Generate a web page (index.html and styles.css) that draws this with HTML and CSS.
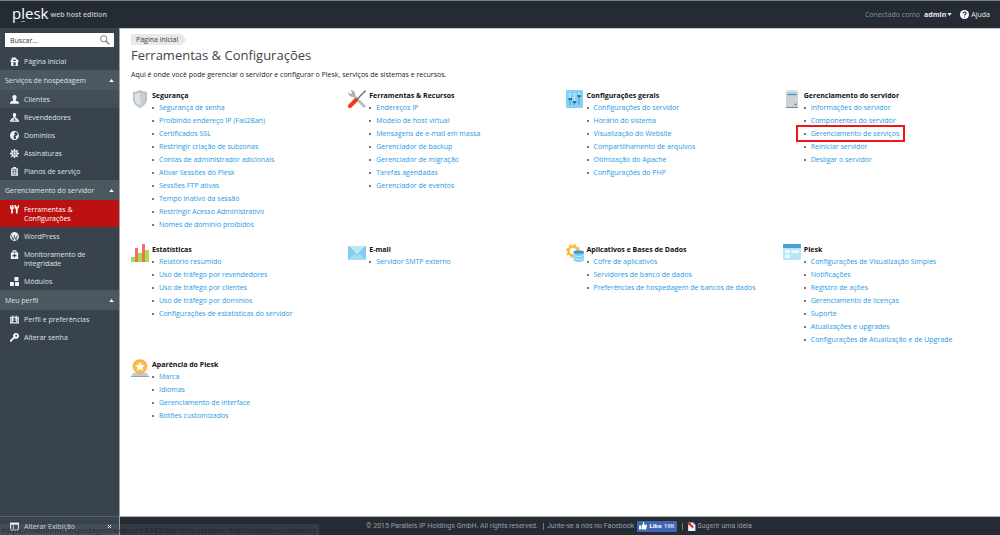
FILE: index.html
```
<!DOCTYPE html>
<html lang="pt-BR">
<head>
<meta charset="utf-8">
<title>Ferramentas &amp; Configurações - Plesk</title>
<link rel="stylesheet" href="styles.css">
</head>
<body>
<header class="topbar">
  <a class="brand" href="#"><span class="brand-name">p<span class="brand-l">l</span>esk</span><span class="brand-edition">web host edition</span></a>
  <div class="account">
    <span class="account-label">Conectado como</span>
    <button class="account-user" type="button">admin<svg class="caret" viewBox="0 0 6 4"><path d="M0 0h6L3 4z" fill="currentColor"/></svg></button>
    <a class="help" href="#"><svg class="help-icon" viewBox="0 0 16 16"><circle cx="8" cy="8" r="8" fill="#fff"/><path d="M5.300 6.200c0-3.600 5.500-3.400 5.500-.4 0 1.800-2.600 1.900-2.600 3.900M8.200 11.400v2" fill="none" stroke="#242b32" stroke-width="2"/></svg>Ajuda</a>
  </div>
</header>
<div class="shell">
  <aside class="sidebar">
    <form class="search" role="search">
      <input class="search-input" type="text" placeholder="Buscar..." aria-label="Buscar">
      <button class="search-button" type="submit" aria-label="Buscar"><svg viewBox="0 0 16 16"><circle cx="6" cy="6" r="5" fill="none" stroke="#777" stroke-width="1.500"/><path d="M9.500 9.500L15 15" stroke="#777" stroke-width="2.200"/></svg></button>
    </form>
    <nav class="nav">
      <a class="nav-item" href="#"><svg class="nav-icon" viewBox="0 0 16 16"><path d="M8 0l8 7-1.300 1.400L14 8v8H2V8l-.7.400L0 7l3-2.600V1h2.500v1.300z" fill="#f2f4f5"/><path d="M6 15V9.500h4V15M8 4l-3 3h6z" fill="#38434d"/></svg>Página inicial</a>
      <button class="nav-group" type="button">Serviços de hospedagem<svg class="nav-caret" viewBox="0 0 6 4"><path d="M0 4h6L3 0z" fill="#fff"/></svg></button>
      <a class="nav-item nav-item-hover" href="#"><svg class="nav-icon" viewBox="0 0 16 16"><path d="M8 0c3 0 4 2 3.700 4.500C11.500 7 10 8 10 9.500c0 1.500 6 2 6 4.500v1.500H0V14c0-2.500 6-3 6-4.500C6 8 4.500 7 4.300 4.500 4 2 5 0 8 0z" fill="#f2f4f5"/></svg>Clientes</a>
      <a class="nav-item" href="#"><svg class="nav-icon" viewBox="0 0 16 16"><path d="M8 0c2.500 0 3.400 2 3 4-.3 2-1.500 2.500-1.500 4l5 2.500V13H16v2.500H0V13h1.500v-2.500l5-2.500c0-1.500-1.200-2-1.500-4-.4-2 .5-4 3-4z" fill="#f2f4f5"/><path d="M4 12.500h8M8 9v4" stroke="#38434d" stroke-width="1.200"/></svg>Revendedores</a>
      <a class="nav-item" href="#"><svg class="nav-icon" viewBox="0 0 16 16"><circle cx="8" cy="8" r="7" fill="#38434d" stroke="#f2f4f5" stroke-width="1.800"/><path d="M2 4c3-4 7-3 7-2L7 4l2 2-3 3 1 4-1 2C1 13 0 8 2 4zM10 9l4-2 1 1c0 3-2 6-4 6z" fill="#f2f4f5"/></svg>Domínios</a>
      <a class="nav-item" href="#"><svg class="nav-icon" viewBox="0 0 16 16"><path d="M8 0v16M0 8h16M2.300 2.300l11.400 11.400M13.700 2.300L2.300 13.700" stroke="#f2f4f5" stroke-width="2.600"/><circle cx="8" cy="8" r="5.500" fill="#f2f4f5"/><circle cx="8" cy="8" r="2.800" fill="none" stroke="#38434d" stroke-width="1.300"/></svg>Assinaturas</a>
      <a class="nav-item" href="#"><svg class="nav-icon" viewBox="0 0 16 16"><path d="M2 2h3V0h6v2h3v14H2z" fill="#e3e6e8"/><path d="M4.500 4.500h7M4.500 14h7M5 7h2v2H5zM9 7h2v2H9zM5 11h2M9 11h2" fill="none" stroke="#38434d" stroke-width="1.200"/></svg>Planos de serviço</a>
      <button class="nav-group" type="button">Gerenciamento do servidor<svg class="nav-caret" viewBox="0 0 6 4"><path d="M0 4h6L3 0z" fill="#fff"/></svg></button>
      <a class="nav-item nav-item-active" href="#"><svg class="nav-icon" viewBox="0 0 16 16"><path d="M0 1l2-1v4h1V0h2v4h1V0l1 1v5L5 8v7H2V8L0 6zM8 0h2l2.500 4L15 0h1v3l-2.500 5v7h-3V8L8 4z" fill="#fff"/></svg>Ferramentas &amp; Configurações</a>
      <a class="nav-item" href="#"><svg class="nav-icon" viewBox="0 0 16 16"><circle cx="8" cy="8" r="7.800" fill="#f2f4f5"/><path d="M2 5l3.500 9M7 5l3.500 9L13 6M5.500 14L8 8" fill="none" stroke="#38434d" stroke-width="1.500"/></svg>WordPress</a>
      <a class="nav-item" href="#"><svg class="nav-icon" viewBox="0 0 16 16"><path d="M5 5V3c0-2.500 6-2.500 6 0v2" fill="none" stroke="#f2f4f5" stroke-width="2"/><path d="M1.500 4.500h13V16h-13z" fill="#f2f4f5"/><path d="M8 6.500v7M4.500 10h7" stroke="#38434d" stroke-width="2"/></svg>Monitoramento de integridade</a>
      <a class="nav-item" href="#"><svg class="nav-icon" viewBox="0 0 16 16"><path d="M8 0h7v7H8zM0 9h7v7H0zM9 9h7v7H9z" fill="#f2f4f5"/></svg>Módulos</a>
      <button class="nav-group" type="button">Meu perfil<svg class="nav-caret" viewBox="0 0 6 4"><path d="M0 4h6L3 0z" fill="#fff"/></svg></button>
      <a class="nav-item" href="#"><svg class="nav-icon" viewBox="0 0 16 16"><path d="M0 3h4V1h2v2h4V1h2v2h4v12H0z" fill="#e3e6e8"/><path d="M8 5c2.500 0 2.200 3 1 4 0 1.500 2.500 1.500 2.500 4h-7c0-2.500 2.500-2.500 2.500-4C5.800 8 5.500 5 8 5z" fill="#38434d"/><path d="M2 5.500v7M14 5.500v7" stroke="#38434d"/></svg>Perfil e preferências</a>
      <a class="nav-item" href="#"><svg class="nav-icon" viewBox="0 0 16 16"><path d="M10.500 0C17 0 18 8 12.500 10c-1.500.4-3 .2-4-.3L7 11H5.500v2H3.800L3 15.500H0V13l5.800-6C4.500 3.500 7 0 10.500 0z" fill="#f2f4f5"/><circle cx="11" cy="5" r="1.700" fill="#38434d"/></svg>Alterar senha</a>
    </nav>
    <div class="view-switch">
      <button class="view-button" type="button"><svg class="nav-icon" viewBox="0 0 16 16"><path d="M0 1h16v14H0z" fill="#f2f4f5"/><path d="M2 5h3v8H2zM6.500 5H14v8H6.500z" fill="#38434d"/></svg>Alterar Exibição</button>
      <button class="view-close" type="button" aria-label="Fechar"><svg viewBox="0 0 6 6"><path d="M1 1l4 4M5 1L1 5" stroke="#fff" stroke-width="1.200"/></svg></button>
    </div>
  </aside>
  <div class="page">
    <main class="content">
      <nav class="breadcrumb" aria-label="Caminho"><a href="#">Página inicial</a></nav>
      <h1 class="title">Ferramentas &amp; Configurações</h1>
      <p class="intro">Aqui é onde você pode gerenciar o servidor e configurar o Plesk, serviços de sistemas e recursos.</p>
      <div class="groups">
        <section class="group">
          <svg class="group-icon" viewBox="0 0 18 18"><path d="M9 0c3 1.500 5 1.800 7 1.800V9c0 4-3 7-7 9-4-2-7-5-7-9V1.800C4 1.800 6 1.500 9 0z" fill="#b9c1c7"/><path d="M9 2.200c2 1 3.500 1.300 5.200 1.400V9c0 3-2 5.300-5.200 7z" fill="#c9d0d5"/><path d="M9 2.200V16C5.800 14.300 3.800 12 3.800 9V3.600C5.500 3.500 7 3.200 9 2.200z" fill="#dde2e6"/></svg>
          <div><h2>Segurança</h2>
          <ul><li><a href="#">Segurança de senha</a></li><li><a href="#">Proibindo endereço IP (Fail2Ban)</a></li><li><a href="#">Certificados SSL</a></li><li><a href="#">Restringir criação de subzonas</a></li><li><a href="#">Contas de administrador adicionais</a></li><li><a href="#">Ativar Sessões do Plesk</a></li><li><a href="#">Sessões FTP ativas</a></li><li><a href="#">Tempo inativo da sessão</a></li><li><a href="#">Restringir Acesso Administrativo</a></li><li><a href="#">Nomes de domínio proibidos</a></li></ul></div>
        </section>
        <section class="group">
          <svg class="group-icon" viewBox="0 0 18 18"><path d="M4.500 4.500L17 17" stroke="#b4bdc3" stroke-width="2.600"/><path d="M2.500 0l3 .8L7.500 4 6 6.800 2.500 6.500 0 4l.5-1.500L3 4.200 4.200 3z" fill="#a5b0b7"/><path d="M9 9.500l6.500-7" stroke="#64727b" stroke-width="1.300"/><path d="M15 2l2-2 1 1-2 2.500z" fill="#64727b"/><path d="M2 16l6-6" stroke="#f23a13" stroke-width="4" stroke-linecap="round"/></svg>
          <div><h2>Ferramentas &amp; Recursos</h2>
          <ul><li><a href="#">Endereços IP</a></li><li><a href="#">Modelo de host virtual</a></li><li><a href="#">Mensagens de e-mail em massa</a></li><li><a href="#">Gerenciador de backup</a></li><li><a href="#">Gerenciador de migração</a></li><li><a href="#">Tarefas agendadas</a></li><li><a href="#">Gerenciador de eventos</a></li></ul></div>
        </section>
        <section class="group">
          <svg class="group-icon" viewBox="0 0 18 18"><rect width="17" height="18" rx="1" fill="#85d2f7"/><path d="M4 3v12M8.500 3v12M13 3v12" stroke="#d9f2fd"/><path d="M4 9v6M8.500 12v3M13 6v9" stroke="#3084b4"/><path d="M2.500 9H6M6.800 12h3.500M11.300 6h3.500" stroke="#1b526f" stroke-width="1.600"/></svg>
          <div><h2>Configurações gerais</h2>
          <ul><li><a href="#">Configurações do servidor</a></li><li><a href="#">Horário do sistema</a></li><li><a href="#">Visualização do Website</a></li><li><a href="#">Compartilhamento de arquivos</a></li><li><a href="#">Otimização do Apache</a></li><li><a href="#">Configurações do PHP</a></li></ul></div>
        </section>
        <section class="group">
          <svg class="group-icon" viewBox="0 0 18 18"><path d="M3 0h12v18H3z" fill="#ccd3d7"/><path d="M3 0h12v2H3z" fill="#dce1e4"/><path d="M4.500 4.500h9" stroke="#2998c9" stroke-width="1.300"/><path d="M3 17h12v1H3z" fill="#78868f"/><circle cx="12.500" cy="14.500" r="1" fill="#ef422d"/></svg>
          <div><h2>Gerenciamento do servidor</h2>
          <ul><li><a href="#">Informações do servidor</a></li><li><a href="#">Componentes do servidor</a></li><li class="marked"><a href="#">Gerenciamento de serviços</a></li><li><a href="#">Reiniciar servidor</a></li><li><a href="#">Desligar o servidor</a></li></ul></div>
        </section>
        <section class="group">
          <svg class="group-icon" viewBox="0 0 18 18"><path d="M0 13h4v5H0zM7 9h4v9H7zM14 6h4v12h-4z" fill="#a4df4c"/><path d="M4 4h3v14H4zM11 0h3v18h-3z" fill="#ef7069"/></svg>
          <div><h2>Estatísticas</h2>
          <ul><li><a href="#">Relatório resumido</a></li><li><a href="#">Uso de tráfego por revendedores</a></li><li><a href="#">Uso de tráfego por clientes</a></li><li><a href="#">Uso de tráfego por domínios</a></li><li><a href="#">Configurações de estatísticas do servidor</a></li></ul></div>
        </section>
        <section class="group">
          <svg class="group-icon" viewBox="0 0 18 18"><path d="M0 2h18v14H0z" fill="#83cef0"/><path d="M0 16l7-7h4l7 7z" fill="#a2ddf6"/><path d="M0 2h18l-9 9z" fill="#b9e7fa"/><path d="M0 2l9 9 9-9" fill="none" stroke="#6fbbe0" stroke-width=".8"/></svg>
          <div><h2>E-mail</h2>
          <ul><li><a href="#">Servidor SMTP externo</a></li></ul></div>
        </section>
        <section class="group">
          <svg class="group-icon" viewBox="0 0 18 18"><circle cx="7" cy="7" r="4.500" fill="none" stroke="#f8bd2f" stroke-width="2.500"/><circle cx="7" cy="7" r="6.200" fill="none" stroke="#f8bd2f" stroke-width="1.800" stroke-dasharray="2.200 2.670"/><path d="M7.500 8v8c0 2.600 10.500 2.600 10.500 0V8z" fill="#81cff2"/><path d="M7.500 11c1 2 9.500 2 10.500 0M7.500 14c1 2 9.500 2 10.500 0" fill="none" stroke="#d9f2fd" stroke-width=".8"/><ellipse cx="12.750" cy="8" rx="5.250" ry="1.800" fill="#3d9ac4"/></svg>
          <div><h2>Aplicativos e Bases de Dados</h2>
          <ul><li><a href="#">Cofre de aplicativos</a></li><li><a href="#">Servidores de banco de dados</a></li><li><a href="#">Preferências de hospedagem de bancos de dados</a></li></ul></div>
        </section>
        <section class="group">
          <svg class="group-icon" viewBox="0 0 18 18"><rect y="0" width="18" height="16" rx="1" fill="#b5e6fa"/><path d="M0 4V1q0-1 1-1h16q1 0 1 1v3z" fill="#4aa3cf"/><path d="M2 6h5v3H2zM8.500 6H16v3H8.500zM2 10.500h5V14H2z" fill="#edf9fe"/></svg>
          <div><h2>Plesk</h2>
          <ul><li><a href="#">Configurações de Visualização Simples</a></li><li><a href="#">Notificações</a></li><li><a href="#">Registro de ações</a></li><li><a href="#">Gerenciamento de licenças</a></li><li><a href="#">Suporte</a></li><li><a href="#">Atualizações e upgrades</a></li><li><a href="#">Configurações de Atualização e de Upgrade</a></li></ul></div>
        </section>
        <section class="group">
          <svg class="group-icon" viewBox="0 0 18 18"><path d="M2 14h14l2 4H0z" fill="#c3cbd1"/><path d="M0 17h18v1H0z" fill="#9aa6ae"/><circle cx="9" cy="7.500" r="7.300" fill="#f7b13c"/><circle cx="9" cy="7.500" r="5.500" fill="#fbc056"/><path d="M9 3l1.400 2.900 3.200.4-2.300 2.200.6 3.200L9 10.100l-2.900 1.600.6-3.200-2.300-2.200 3.200-.4z" fill="#fff"/></svg>
          <div><h2>Aparência do Plesk</h2>
          <ul><li><a href="#">Marca</a></li><li><a href="#">Idiomas</a></li><li><a href="#">Gerenciamento de interface</a></li><li><a href="#">Botões customizados</a></li></ul></div>
        </section>
      </div>
    </main>
    <footer class="footer">
      <span>© 2015 Parallels IP Holdings GmbH. All rights reserved.</span>
      <span class="footer-social">Junte-se a nós no Facebook
        <button class="like" type="button"><svg viewBox="0 0 16 16"><path d="M0 7h4v8H0zM5 7l3-3V0c3 0 3 3 2.500 5.500H16L14.500 15H7l-2-1z" fill="#fff"/></svg>Like <span class="like-count">19K</span></button></span>
      <a class="footer-idea" href="#"><svg viewBox="0 0 16 16"><path d="M2 1h9l4 4v11H2z" fill="#e2f6fb"/><path d="M11 1v4h4" fill="#7fb7c9"/><path d="M0 0l5 1 7 8-2 2-8-7z" fill="#e52417"/></svg>Sugerir uma ideia</a>
    </footer>
  </div>
</div>
<div class="status">https://ownlinm.hospedagemweb.net:8443/admin/customer/list?context=customers</div>
</body>
</html>
```
FILE: styles.css
```
* {
  box-sizing: border-box;
}

body {
  margin: 0;
  min-height: 100vh;
  display: flex;
  flex-direction: column;
  font: 7px/13px "Open Sans", "Noto Sans", sans-serif;
  color: #222;
  background: #fff;
}

a {
  color: inherit;
  text-decoration: none;
}

button {
  margin: 0;
  padding: 0;
  border: 0;
  background: none;
  font: inherit;
  color: inherit;
  text-align: left;
  cursor: pointer;
}

svg {
  display: block;
  flex: none;
}

.topbar {
  display: flex;
  justify-content: space-between;
  align-items: center;
  height: 28px;
  padding: 0 10px 0 12px;
  border-top: 1px solid #7d8183;
  background: #242b32;
  color: #e8eaeb;
}

.brand {
  display: flex;
  align-items: center;
  gap: 2px;
}

.brand-name {
  padding-bottom: 4px;
  font-size: 15px;
  line-height: 20px;
  color: #fff;
}

.brand-l {
  text-decoration: underline 1px #49b4d6;
  text-underline-offset: 2px;
}

.brand-edition {
  font-size: 7px;
  font-weight: 600;
  color: #c3c7ca;
}

.account {
  display: flex;
  align-items: center;
}

.account-label {
  margin-right: 4px;
  color: #8d9296;
}

.account-user {
  display: flex;
  align-items: center;
  gap: 1px;
  margin-right: 8px;
  font-weight: 700;
}

.caret {
  width: 5px;
  height: 3px;
}

.help {
  display: flex;
  align-items: center;
  gap: 2px;
}

.help-icon {
  width: 9px;
  height: 9px;
}

.shell {
  flex: 1;
  display: grid;
  grid-template-columns: 120px 1fr;
}

.sidebar {
  display: flex;
  flex-direction: column;
  background: #38434d;
  border-right: 1px solid #9da3a7;
  color: #dfe2e4;
}

.search {
  display: flex;
  align-items: center;
  height: 14px;
  margin: 5px;
  background: #fff;
}

.search-input {
  flex: 1;
  min-width: 0;
  padding: 0 5px;
  border: 0;
  background: none;
  font: inherit;
  color: #333;
}

.search-input::placeholder {
  color: #333;
  opacity: 1;
}

.search-button svg {
  width: 10px;
  height: 10px;
  margin-right: 4px;
}

.nav {
  flex: 1;
}

.nav-item {
  display: flex;
  align-items: flex-start;
  gap: 5px;
  padding: 5px 20px 4px 10px;
  line-height: 9px;
}

.nav-icon {
  width: 9px;
  height: 9px;
}

.nav-item-hover {
  background: #434e58;
}

.nav-item-active {
  background: #bb1111;
  color: #fff;
}

.nav-group {
  display: flex;
  justify-content: space-between;
  align-items: center;
  width: 100%;
  height: 20px;
  padding: 0 5px;
  background: #4c5860;
}

.nav-caret {
  width: 5px;
  height: 3px;
}

.view-switch {
  display: flex;
  justify-content: space-between;
  align-items: center;
  height: 19px;
  padding: 0 7px 0 10px;
  border-top: 1px solid #56616b;
}

.view-button {
  display: flex;
  align-items: center;
  gap: 5px;
}

.view-close svg {
  width: 5px;
  height: 5px;
}

.page {
  display: flex;
  flex-direction: column;
  min-width: 0;
  border-top: 1px solid #c8cacb;
}

.content {
  flex: 1;
  padding: 5px 0 16px 11px;
}

.breadcrumb {
  display: flex;
}

.breadcrumb a {
  height: 11px;
  padding: 0 8px 0 5px;
  line-height: 11px;
  background: #e8e8e8;
  color: #444;
  clip-path: polygon(0 0, calc(100% - 5px) 0, 100% 50%, calc(100% - 5px) 100%, 0 100%);
}

.title {
  margin: 1px 0 5px;
  font-size: 13px;
  line-height: 18px;
  font-weight: 400;
  color: #444;
}

.intro {
  margin: 0 0 9px;
  line-height: 12px;
}

.groups {
  display: grid;
  grid-template-columns: repeat(4, 1fr);
  row-gap: 12px;
}

.group {
  display: flex;
  gap: 3px;
}

.group-icon {
  width: 18px;
  height: 18px;
}

.group h2 {
  margin: 0;
  font-size: 7px;
  line-height: 11px;
  font-weight: 700;
  color: #111;
}

.group ul {
  margin: 0;
  padding: 0 0 1px;
  list-style: none;
}

.group li {
  display: flex;
  align-items: center;
  gap: 5px;
  height: 13px;
  color: #2798e4;
}

.group li::before {
  content: "";
  width: 2px;
  height: 2px;
  background: #777;
}

.group .marked {
  height: 17px;
  margin: -2px -6px -2px -8px;
  padding: 0 4px 0 6px;
  border: 2px solid #f0141a;
}

.footer {
  display: flex;
  align-items: center;
  height: 19px;
  padding-left: 246px;
  gap: 5px;
  border-top: 1px solid #b3b6b8;
  background: #242b32;
  color: #9a9fa3;
  font-family: Roboto, "Open Sans", sans-serif;
}

.footer-social,
.footer-idea {
  display: flex;
  align-items: center;
  gap: 3px;
}

.footer-social::before,
.footer-idea::before {
  content: "";
  width: 1px;
  height: 7px;
  background: #777d82;
}

.footer-idea {
  gap: 2px;
}

.footer-idea::before {
  margin-right: 2px;
}

.footer-idea svg {
  width: 9px;
  height: 9px;
}

.like {
  display: flex;
  align-items: center;
  gap: 2px;
  height: 11px;
  padding: 0 2px;
  border-radius: 1px;
  background: #4267b2;
  color: #fff;
  font-family: "Open Sans", sans-serif;
  font-size: 6px;
  font-weight: 700;
}

.like svg {
  width: 8px;
  height: 8px;
}

.like-count {
  color: #cdd7ec;
}

.status {
  position: fixed;
  left: 0;
  bottom: 0;
  height: 11px;
  padding: 0 3px 0 2px;
  border-radius: 0 2px 0 0;
  background: rgba(120, 125, 128, 0.2);
  color: rgba(12, 16, 20, 0.55);
  font-size: 8px;
  line-height: 11px;
  pointer-events: none;
}
```
